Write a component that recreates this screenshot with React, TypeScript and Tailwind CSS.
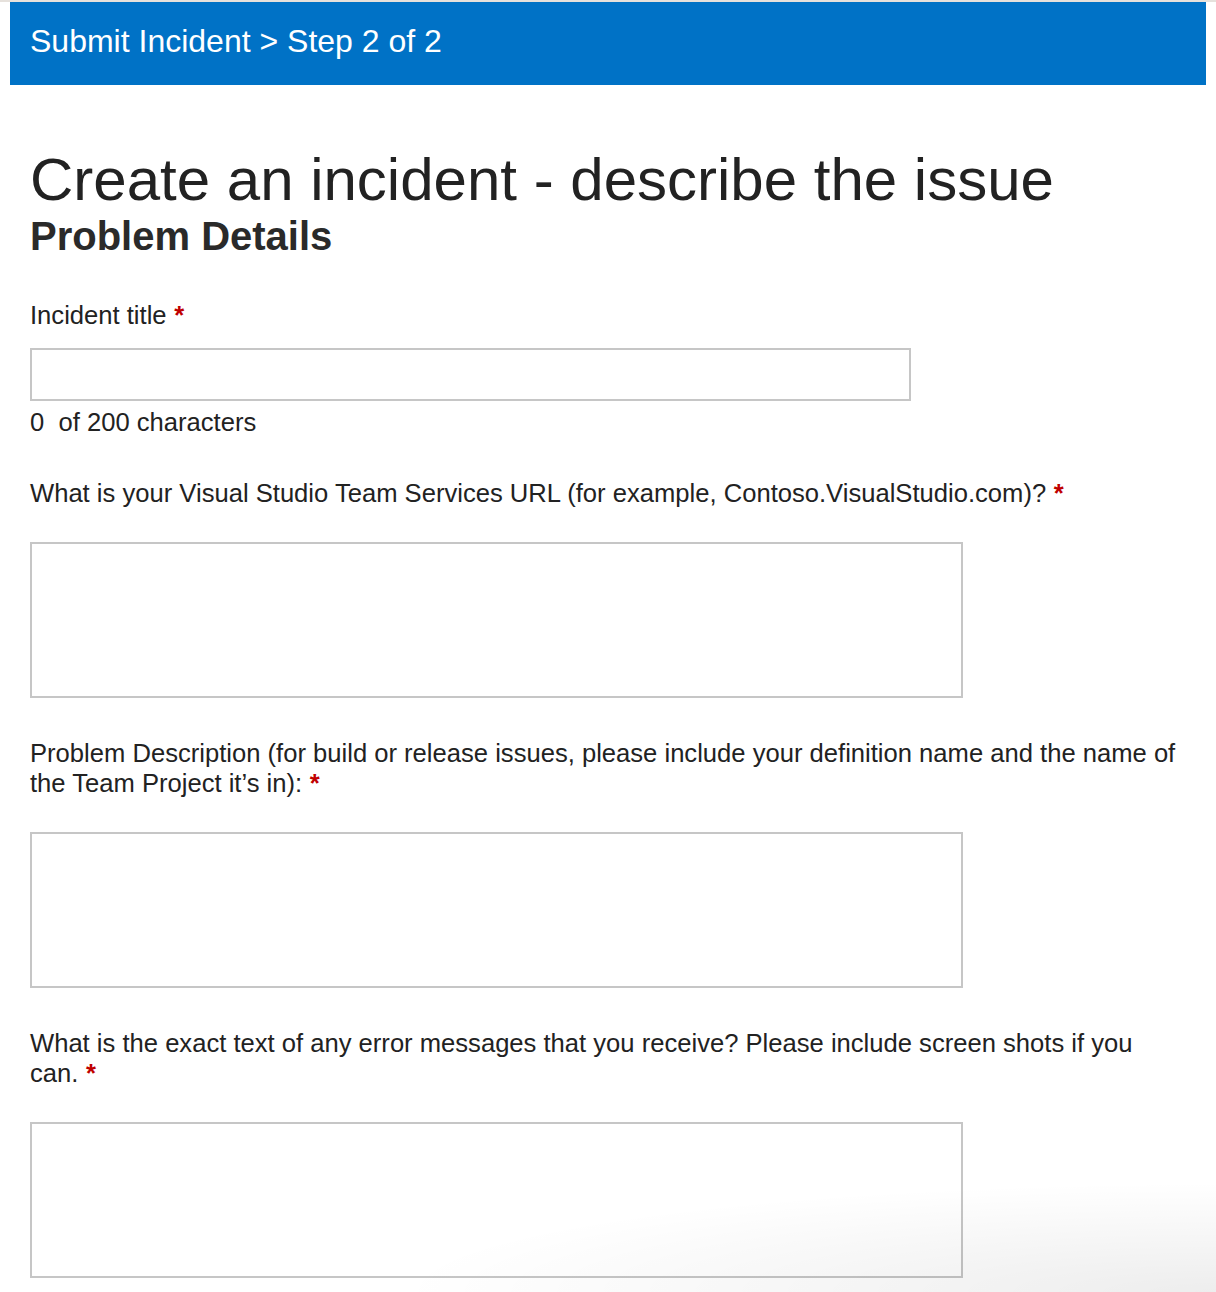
import React from 'react';

const fields = [
  {
    id: 'url',
    label: 'What is your Visual Studio Team Services URL (for example, Contoso.VisualStudio.com)?',
  },
  {
    id: 'description',
    label:
      'Problem Description (for build or release issues, please include your definition name and the name of the Team Project it\u2019s in):',
  },
  {
    id: 'errors',
    label: 'What is the exact text of any error messages that you receive? Please include screen shots if you can.',
  },
];

function Required() {
  return <span className="ml-[0.3em] font-bold text-[#c00000]">*</span>;
}

export default function App() {
  return (
    <div className="relative min-h-[1292px] overflow-hidden bg-white font-['Liberation_Sans',Arial,sans-serif] text-[#222]">
      <div className="h-[2px] bg-[#e6e1dc]" />

      <div className="mx-[10px] h-[83px] bg-[#0072c6] px-5 pt-[20px]">
        <h1 className="text-[32px] leading-[1.2] text-white">Submit Incident &gt; Step 2 of 2</h1>
      </div>

      <main className="mx-[10px] px-5 pt-[62px]">
        <h2 className="text-[60px] leading-[66px]">Create an incident - describe the issue</h2>
        <h3 className="text-[40px] font-bold leading-[46px] text-[#2a2a2a]">Problem Details</h3>

        <form className="w-[1150px] pt-[41px] text-[25.6px] leading-[30px]">
          <div>
            <label htmlFor="title">
              Incident title
              <Required />
            </label>
            <input id="title" type="text" className="mt-[18px] block h-[53px] w-[881px] border-2 border-[#c6c6c6] bg-white outline-none" />
            <p className="mt-[6px]">0&nbsp; of 200 characters</p>
          </div>

          {fields.map((field, i) => (
            <div key={field.id} className={i === 0 ? 'mt-[41px]' : 'mt-[40px]'}>
              <label htmlFor={field.id} className="block">
                {field.label}
                <Required />
              </label>
              <textarea id={field.id} className="mt-[34px] block h-[156px] w-[933px] resize-none border-2 border-[#c6c6c6] bg-white outline-none" />
            </div>
          ))}
        </form>
      </main>

      <div className="pointer-events-none absolute bottom-0 right-0 h-[110px] w-[820px] bg-[radial-gradient(ellipse_100%_100%_at_100%_100%,rgba(0,0,0,0.07),rgba(0,0,0,0.03)_55%,transparent_100%)]" />
    </div>
  );
}
